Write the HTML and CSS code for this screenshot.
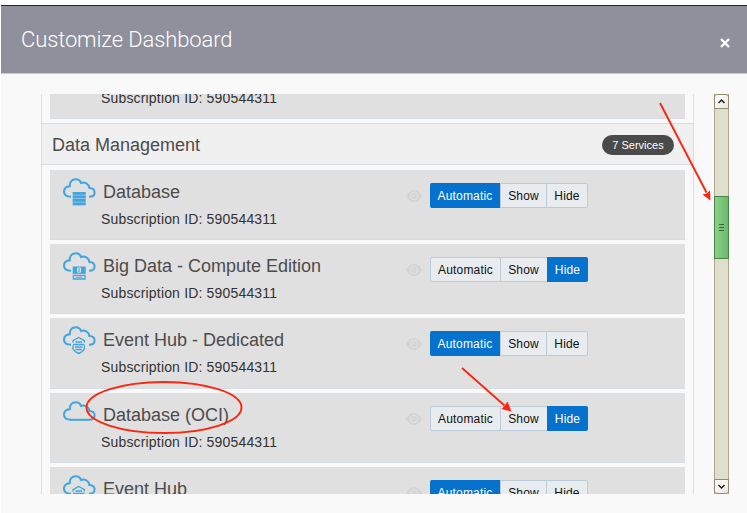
FILE: index.html
```html
<!DOCTYPE html>
<html lang="en">
<head>
<meta charset="utf-8">
<title>Customize Dashboard</title>
<link rel="stylesheet" href="styles.css">
</head>
<body>
<svg class="defs" width="0" height="0">
  <symbol id="cloud" viewBox="0 0 40 36"><path d="M11 22.8C7 22.8 4 21 4 17.6C4 14.6 6.2 12.5 9.8 12.2C9.4 8 12 5.2 15.8 5.2C18.6 5.2 20.4 6.7 21 9C24.6 7.6 28.8 9.6 29.4 14C32.6 14.2 34.6 16 34.6 18.5C34.6 21 32.4 22.8 29 22.8"/></symbol>
  <symbol id="hub" viewBox="0 0 40 36"><path d="M13 19V17.2L18.7 14L24.4 17.2V19M13 22V25.5C14 27.5 16.500 29 18.700 30C21 29 23.500 27.500 24.400 25.500V22M15.500 18.500H22M13 21H24.500M15 23.500H22.500M15.500 26H22" stroke-width="1.400"/></symbol>
  <symbol id="eye" viewBox="0 0 16 12"><path d="M0 6C2 2 5 0 8 0S14 2 16 6C14 10 11 12 8 12S2 10 0 6Z"/><circle cx="8" cy="6" r="3.600" fill="none" stroke="#e0e0e0" stroke-width="1.400"/><path d="M8 4V6H6" fill="none" stroke="#e0e0e0"/></symbol>
</svg>
<div class="dialog">
  <header class="header">
    <h1>Customize Dashboard</h1>
    <svg class="close" width="10" height="10" viewBox="0 0 10 10"><path d="M1 1L9 9M9 1L1 9"/></svg>
  </header>
  <main class="body">
    <div class="list">
      <div class="card first"><div class="icon"></div><div class="info"><h3>&nbsp;</h3><p>Subscription ID: 590544311</p></div></div>
      <div class="section"><h2>Data Management</h2><span class="count">7 Services</span></div>
      <div class="cards">
        <div class="card">
          <svg class="icon"><use href="#cloud"/><path class="soft" d="M12.700 18H25.700V31.300H12.700Z"/><path class="solid" d="M12.700 18H25.700V20.800H12.700ZM12.700 21.500H25.700V24.300H12.700ZM12.700 25H25.700V27.800H12.700ZM12.700 28.500H25.700V31.300H12.700Z"/></svg>
          <div class="info"><h3>Database</h3><p>Subscription ID: 590544311</p></div>
          <svg class="eye"><use href="#eye"/></svg>
          <div class="toggle"><span class="on">Automatic</span><span>Show</span><span>Hide</span></div>
        </div>
        <div class="card">
          <svg class="icon"><use href="#cloud"/><path class="solid" d="M12.700 18.500H25.700V25.900H12.700Z"/><path class="mark" d="M17.500 20H20.500V24.200H17.500ZM17.500 22H20.500"/><path d="M13.400 27.400H25V31H13.400Z" stroke-width="1.400"/><path d="M15.500 29.200H22.500" stroke-width="1"/></svg>
          <div class="info"><h3>Big Data - Compute Edition</h3><p>Subscription ID: 590544311</p></div>
          <svg class="eye"><use href="#eye"/></svg>
          <div class="toggle"><span>Automatic</span><span>Show</span><span class="on">Hide</span></div>
        </div>
        <div class="card tall">
          <svg class="icon"><use href="#cloud"/><use href="#hub" y="1.500"/></svg>
          <div class="info"><h3>Event Hub - Dedicated</h3><p>Subscription ID: 590544311</p></div>
          <svg class="eye"><use href="#eye"/></svg>
          <div class="toggle"><span class="on">Automatic</span><span>Show</span><span>Hide</span></div>
        </div>
        <div class="card">
          <svg class="icon"><use href="#cloud"/><path d="M10.500 22.800H29.500"/></svg>
          <div class="info"><h3>Database (OCI)</h3><p>Subscription ID: 590544311</p></div>
          <svg class="eye"><use href="#eye"/></svg>
          <div class="toggle"><span>Automatic</span><span>Show</span><span class="on">Hide</span></div>
        </div>
        <div class="card">
          <svg class="icon"><use href="#cloud"/><use href="#hub" y="1.500"/></svg>
          <div class="info"><h3>Event Hub</h3></div>
          <svg class="eye"><use href="#eye"/></svg>
          <div class="toggle"><span class="on">Automatic</span><span>Show</span><span>Hide</span></div>
        </div>
      </div>
    </div>
    <div class="scrollbar">
      <div class="arrow up"><svg width="9" height="7" viewBox="0 0 9 7"><path d="M1.500 5L4.500 2L7.500 5"/></svg></div>
      <div class="thumb"><i></i><i></i><i></i></div>
      <div class="arrow down"><svg width="9" height="7" viewBox="0 0 9 7"><path d="M1.500 2L4.500 5L7.500 2"/></svg></div>
    </div>
  </main>
</div>
<svg class="notes" width="747" height="513" viewBox="0 0 747 513">
  <ellipse cx="164" cy="407.500" rx="77.500" ry="25.500"/>
  <path d="M660 103L706.500 192.500M462 368L504.500 405.500"/>
  <path class="head" d="M710.500 200.500L702.500 194.500L706.500 193.500L710 190.500ZM511.500 411.500L501.500 409L504.800 405.500L507.500 401.500Z"/>
</svg>
</body>
</html>
```
FILE: styles.css
```css
* { box-sizing: border-box; }
body {
  margin: 0;
  padding: 5px 0 0 1px;
  height: 513px;
  overflow: hidden;
  background: #fff;
  font-family: "Liberation Sans", Arial, sans-serif;
  color: #4c4c4c;
}
h1, h2, h3, p { margin: 0; font-weight: 400; }
.defs { position: absolute; }
.dialog {
  height: 508px;
  background: #f9f9f9;
  border-top: 1px solid #0c2b4b;
}
.header {
  height: 68px;
  padding: 0 17px 0 20px;
  display: flex;
  align-items: center;
  justify-content: space-between;
  background: #8f909c;
  border-bottom: 1px solid #c4c8d0;
}
.header h1 {
  font: 300 22px/28px Roboto, sans-serif;
  letter-spacing: -0.12px;
  color: #fff;
}
.close { margin-top: 7px; fill: none; stroke: #fff; stroke-width: 2.4; }
.body { display: flex; padding: 20px 0 0 40px; }
.list {
  width: 653px;
  height: 400px;
  overflow: hidden;
  border: solid #d9dee2;
  border-width: 0 1px;
}
.card {
  display: flex;
  width: 635px;
  height: 70px;
  background: #e0e0e0;
  border-bottom: 1px solid #d6dee4;
}
.tall { height: 71px; }
.first { margin: -45px 0 4px 8px; }
.section {
  height: 42px;
  padding: 0 19px 0 10px;
  display: flex;
  align-items: center;
  justify-content: space-between;
  background: #f0f0f0;
  border: solid #d6dee4;
  border-width: 1px 0;
}
.section h2 { font-size: 18px; line-height: 22px; padding-top: 2px; }
.count {
  width: 72px;
  height: 20px;
  margin-top: 2px;
  border-radius: 10px;
  background: #4a4a4a;
  color: #fff;
  font-size: 11px;
  line-height: 20px;
  text-align: center;
}
.cards { display: flex; flex-direction: column; gap: 4px; padding: 5px 0 0 8px; }
.cards .card { flex: none; }
.icon {
  width: 40px;
  height: 36px;
  margin: 4px 0 0 10px;
  flex: none;
  fill: none;
  stroke: #42a5de;
  stroke-width: 2;
}
.icon .solid { fill: #42a5de; stroke: none; }
.icon .soft { fill: #9fc9e2; stroke: none; }
.icon .mark { stroke: #e0e0e0; stroke-width: 1; }
.info { width: 306px; padding: 11px 0 0 1px; }
.info h3 { font-size: 18px; line-height: 22px; padding-left: 2px; }
.info p {
  font-size: 14px;
  line-height: 18px;
  letter-spacing: 0.17px;
  padding-top: 7px;
  color: #333;
}
.eye { width: 16px; height: 12px; margin: 20px 8px 0 0; fill: #d2d4d6; flex: none; }
.toggle {
  display: flex;
  width: 158px;
  height: 25px;
  margin-top: 13px;
  border: 1px solid #bccbd8;
  border-radius: 2px;
  background: #e8ecef;
  color: #111;
  font-size: 12px;
  letter-spacing: 0.17px;
  line-height: 25px;
  text-align: center;
}
.toggle span { width: 46px; border-left: 1px solid #bccbd8; }
.toggle span:first-child { width: 69px; border-left: 0; }
.toggle span:last-child { width: 41px; }
.toggle .on, .toggle .on:first-child {
  margin: -1px;
  padding-top: 1px;
  border: 0;
  border-radius: 2px 0 0 2px;
  background: #0572ce;
  color: #fff;
}
.toggle .on:first-child { width: 70px; margin-right: 0; }
.toggle .on:last-child { width: 41px; margin-left: 1px; border-radius: 0 2px 2px 0; }
.scrollbar {
  width: 15px;
  height: 400px;
  margin-left: 20px;
  display: flex;
  flex-direction: column;
  background: #e0decf;
  border: solid #aaa78a;
  border-width: 0 1px;
}
.arrow {
  width: 15px;
  height: 15px;
  margin-left: -1px;
  display: flex;
  align-items: center;
  justify-content: center;
  background: linear-gradient(135deg, #fff, #e9e8de);
  border: 1px solid #8e8b70;
  border-radius: 3px 3px 0 0;
}
.arrow svg { fill: none; stroke: #222; stroke-width: 1.5; }
.down { margin-top: auto; border-radius: 0 0 3px 3px; }
.thumb {
  width: 15px;
  height: 63px;
  margin: 87px 0 0 -1px;
  display: flex;
  flex-direction: column;
  align-items: center;
  justify-content: center;
  gap: 2px;
  background: linear-gradient(90deg, #8bd18a, #6aba69);
  border: 1px solid #4c854b;
}
.thumb i { width: 5px; height: 1px; background: #3b623a; }
.notes { position: absolute; left: 0; top: 0; fill: none; stroke: #fb260f; stroke-width: 1.9; }
.notes .head { fill: #fb260f; stroke: none; }
```
